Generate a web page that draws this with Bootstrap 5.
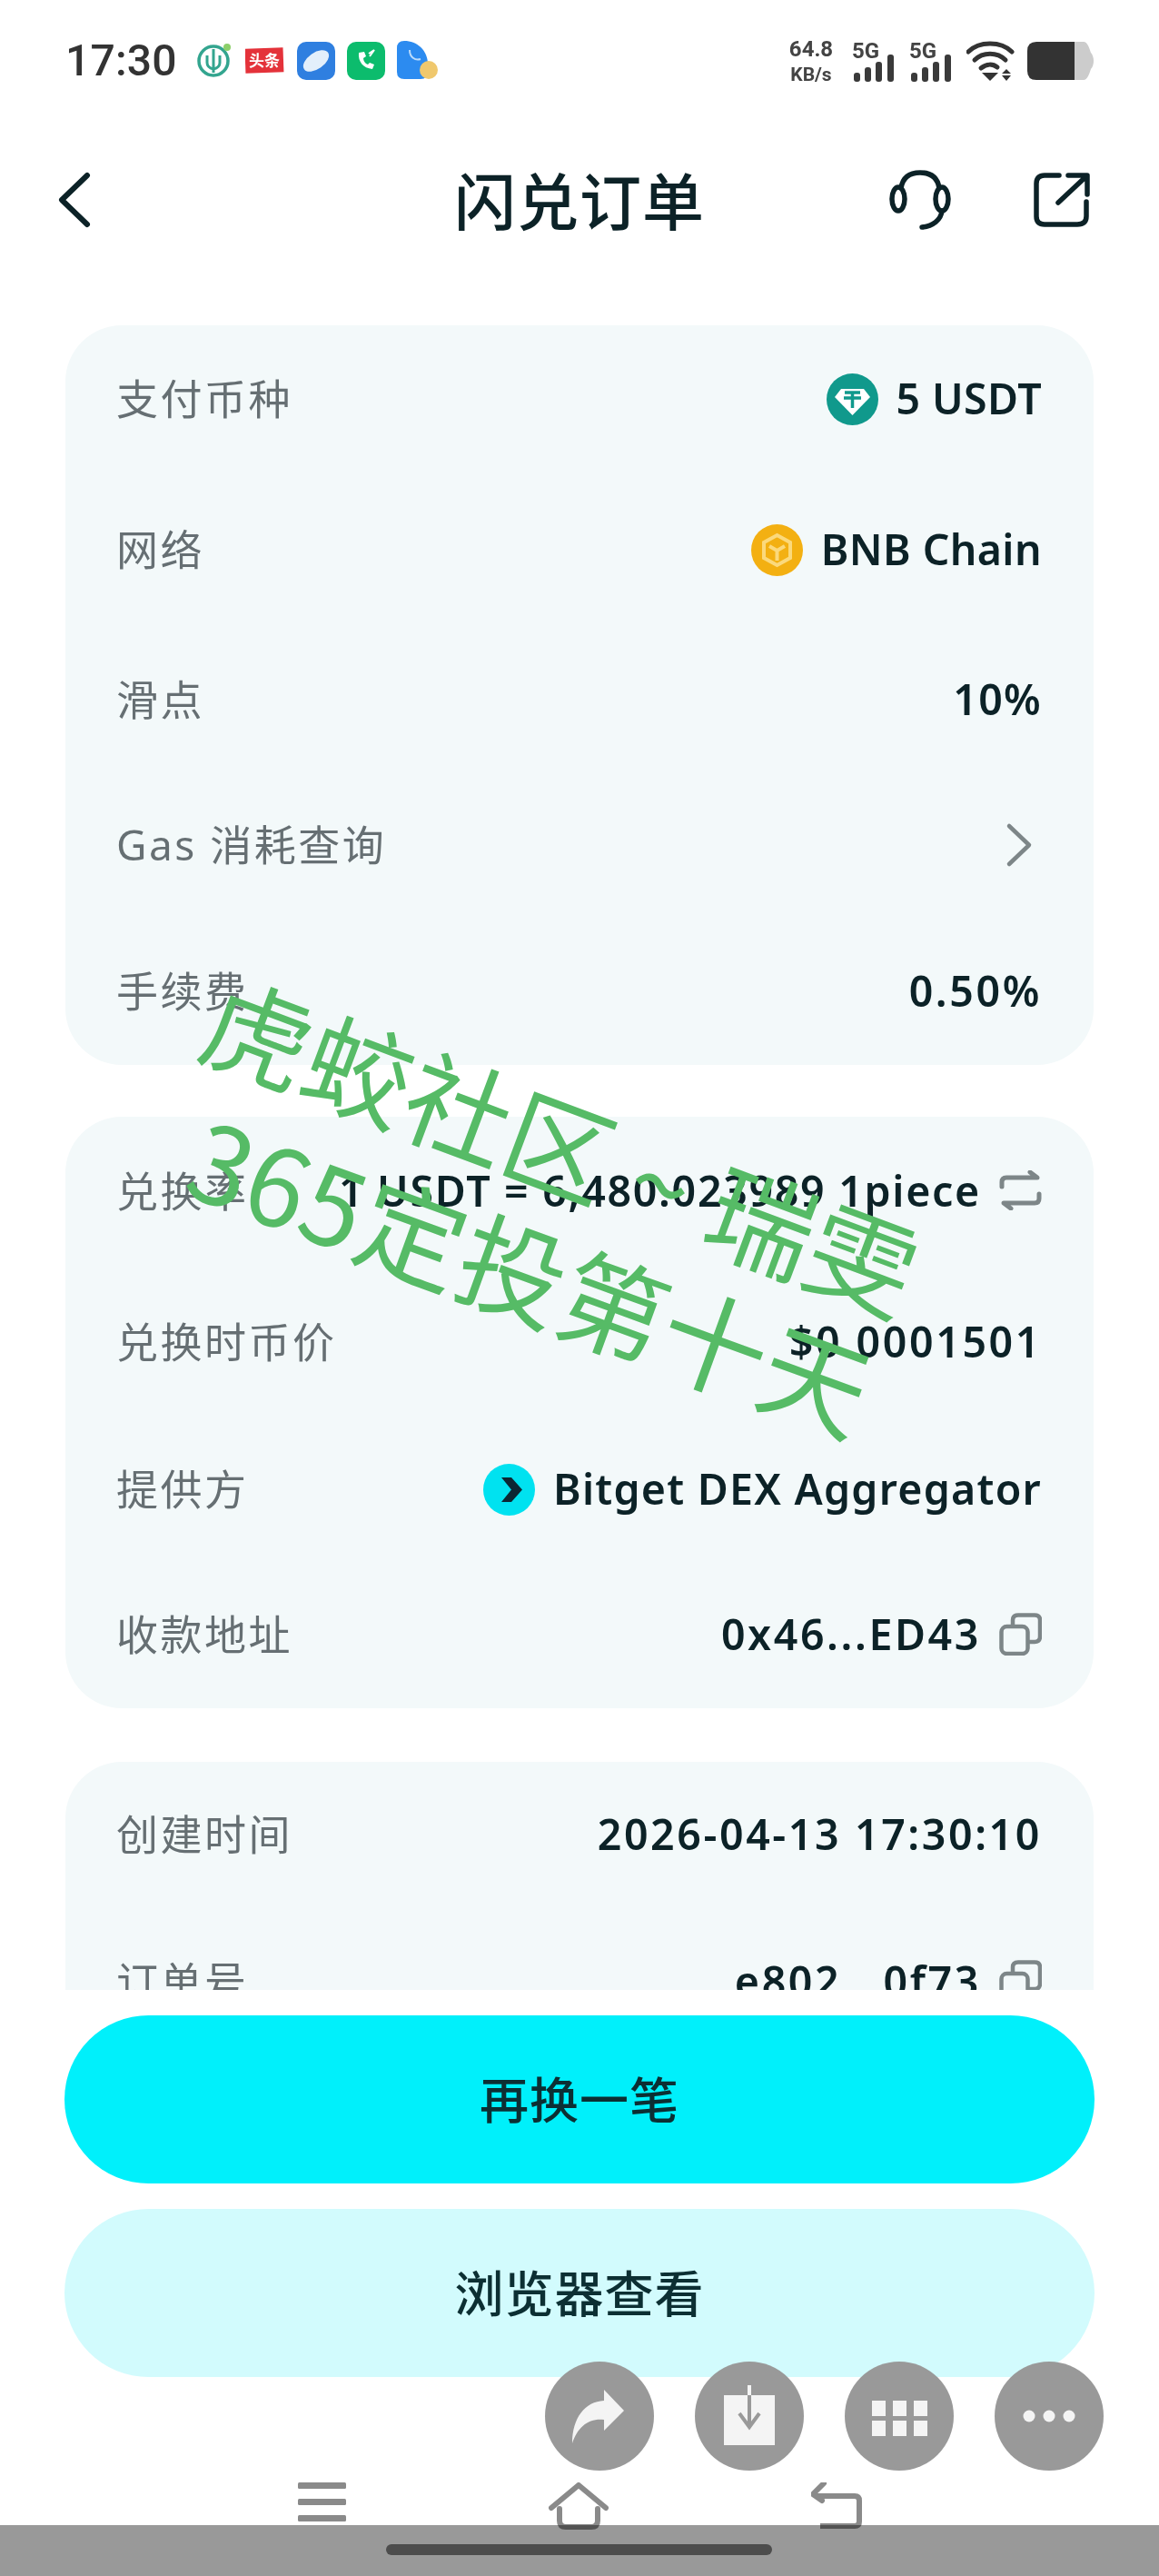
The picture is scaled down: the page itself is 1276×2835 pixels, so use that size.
<!DOCTYPE html>
<html lang="zh-CN">
<head>
<meta charset="utf-8">
<title>闪兑订单</title>
<link href="https://cdn.jsdelivr.net/npm/bootstrap@5.3.0/dist/css/bootstrap.min.css" rel="stylesheet">
<style>
html,body{margin:0;background:#fff}
body{font-family:"Noto Sans","Noto Sans CJK SC",sans-serif;color:#0c2227}
.shot{width:1276px;height:2835px;overflow:hidden;background:#fff}
.sbar{height:134px;padding:0 71px 0 72px}
.clock{font-family:Roboto,sans-serif;font-weight:500;font-size:48px;color:#333;line-height:1;letter-spacing:.2px}
.nets{font-family:Roboto,sans-serif;font-weight:700;color:#444;text-align:center;line-height:1;width:60px}
.nets-a{font-size:24px}.nets-b{font-size:21px;margin-top:6px}
.si{margin-left:13px}
.sg{margin-left:15px}
.tbar{height:172px;padding:0 76px 0 62px}
.ttl{font-family:"Noto Sans CJK SC",sans-serif;font-weight:500;font-size:68px;letter-spacing:1px;line-height:1;padding-bottom:2px}
.tbar-side{width:235px}
.tbar-tools{gap:91px}
.scroller{height:1884px;overflow:hidden;padding:52px 72px 0;flex:none}
.panel{background:#f3f9fa;border-radius:62px;padding:0 57px 0 56px}
.gap-panel{margin-top:57px}
.gap-panel2{margin-top:59px}
.rw{font-size:44px;line-height:1.2}
.h156{height:156px}.h160{height:160px}.h162{height:162px}.h163{height:163px}.h169{height:169px}.h170{height:170px}
.lbl{font-family:"Noto Sans","Noto Sans CJK SC",sans-serif;font-weight:400;font-size:46px;letter-spacing:2.5px;color:#666f73}
.val{font-weight:600;font-size:46.5px;letter-spacing:.4px;white-space:nowrap}
.val-flex{display:flex;align-items:center;gap:20px}
.ls1{letter-spacing:1.25px}.ls2{letter-spacing:1.7px}.ls3{letter-spacing:2.6px}
.coin{width:57px;height:57px;flex:none}
.acts{padding:28px 71px 0;flex:none}
.pill-a,.pill-b{display:flex;align-items:center;justify-content:center;width:100%;height:185px;padding:0 0 4px;border-radius:93px;border:0;font-family:"Noto Sans CJK SC",sans-serif;font-weight:500;font-size:54px;letter-spacing:1px;color:#0c2f33}
.pill-a{background:#00f0fb}
.pill-b{background:#d2fbfd;margin-top:28px}
.floats{right:61px;top:2599px;gap:45px}
.fab{width:120px;height:120px;border-radius:50%;background:#999;display:block;flex:none}
.navrow{padding-top:116px;gap:223px}
.band{left:0;right:0;bottom:0;height:56px;background:#999;mix-blend-mode:multiply}
.hbar{width:425px;height:12px;border-radius:6px;background:#4d4d4d;top:21px;left:425px}
.wm{font-family:"Noto Sans CJK SC",sans-serif;font-weight:400;color:#56bb66;line-height:1;white-space:nowrap;transform-origin:0 0;font-size:118px}
.wm1{left:252px;top:1057px;transform:rotate(20.5deg)}
.wm2{left:236px;top:1210px;transform:rotate(20deg)}
.wm-t{padding:0 27px}
</style>
</head>
<body>
<div class="shot position-relative d-flex flex-column">

  <div class="sbar d-flex align-items-center flex-none">
    <span class="clock me-3">17:30</span>
    <svg width="42" height="42" viewBox="0 0 42 42" class="ms-1"><circle cx="20" cy="21" r="16" fill="none" stroke="#33a58f" stroke-width="3.5"/><path d="M20 8v26M13 15v8c0 4 3 6 7 7 4-1 7-3 7-7v-8" fill="none" stroke="#33a58f" stroke-width="3"/><circle cx="35" cy="6" r="4" fill="#8ccf6a"/></svg>
    <svg width="44" height="34" viewBox="0 0 44 34" class="si"><rect y="3" width="42" height="27" fill="#e4323a" transform="rotate(-2 21 17)"/><text x="21" y="23" font-size="17" font-family="Noto Sans CJK SC" font-weight="700" text-anchor="middle" fill="#fff">头条</text></svg>
    <svg width="42" height="42" viewBox="0 0 42 42" class="si"><rect width="42" height="42" rx="10" fill="#2f7fe0"/><ellipse cx="21" cy="21" rx="16" ry="9" transform="rotate(-35 21 21)" fill="#e3effb"/></svg>
    <svg width="42" height="42" viewBox="0 0 42 42" class="si"><rect width="42" height="42" rx="10" fill="#0cbc6d"/><path d="M13 12c-1 10 5 17 15 18l2-5-5-2-2 2c-3-1-5-4-5-7l3-2-2-5z" fill="#fff"/><path d="M24 13l6-4-5 7" fill="none" stroke="#fff" stroke-width="2"/></svg>
    <svg width="46" height="44" viewBox="0 0 46 44" class="si"><path d="M0 8Q0 0 8 0C22 0 34 10 34 26V34Q34 42 26 42H8Q0 42 0 34Z" fill="#2c8bf0"/><circle cx="35" cy="32" r="10" fill="#f0c86d"/><path d="M14 10c0 8 6 12 12 10" fill="none" stroke="#bcdcfb" stroke-width="2"/></svg>

    <div class="nets ms-auto"><div class="nets-a">64.8</div><div class="nets-b">KB/s</div></div>
    <svg width="48" height="52" viewBox="0 0 48 52" class="sg"><text x="0" y="23" font-family="Roboto" font-weight="700" font-size="24" fill="#444">5G</text><g fill="#3a3a3a"><rect x="2" y="39" width="7" height="10" rx="3"/><rect x="14" y="33" width="7" height="16" rx="3"/><rect x="26" y="27" width="7" height="22" rx="3"/><rect x="39" y="19" width="7" height="30" rx="3"/></g></svg>
    <svg width="48" height="52" viewBox="0 0 48 52" class="sg"><text x="0" y="23" font-family="Roboto" font-weight="700" font-size="24" fill="#444">5G</text><g fill="#3a3a3a"><rect x="2" y="39" width="7" height="10" rx="3"/><rect x="14" y="33" width="7" height="16" rx="3"/><rect x="26" y="27" width="7" height="22" rx="3"/><rect x="39" y="19" width="7" height="30" rx="3"/></g></svg>
    <svg width="54" height="44" viewBox="0 0 54 44" class="sg" fill="none" stroke="#333" stroke-width="5" stroke-linecap="round"><path d="M2 12C14 0 38 0 50 12"/><path d="M9 21C18 12 34 12 43 21"/><path d="M16 30C22 25 29 25 34 29"/><path d="M17 35H35L26 44Z" fill="#333" stroke="none"/><path d="M44 31l5 5H39ZM44 44l5-6H39Z" fill="#333" stroke="none"/></svg>
    <svg width="74" height="42" viewBox="0 0 74 42" class="si"><path d="M52 0H62C66 0 68 6 70 12 72 14 73 18 73 21S72 28 70 30C68 36 66 42 62 42H52Z" fill="#ccc"/><path d="M10 0H52V42H10Q0 42 0 32V10Q0 0 10 0Z" fill="#333"/></svg>
  </div>

  <div class="tbar d-flex align-items-center justify-content-between flex-none">
    <div class="tbar-side"><svg width="40" height="62" viewBox="0 0 40 62" fill="none" stroke="#0c2227" stroke-width="6" stroke-linecap="round" stroke-linejoin="round" class="d-block"><path d="M34 4 6 31 34 58"/></svg></div>
    <div class="ttl">闪兑订单</div>
    <div class="tbar-tools d-flex align-items-center">
      <svg width="68" height="66" viewBox="0 0 68 66" fill="none" stroke="#0c2227" stroke-width="5.500" stroke-linecap="round"><path d="M13 20C15 7 24 3 34 3S53 7 55 20"/><ellipse cx="10" cy="32" rx="7" ry="13"/><ellipse cx="58" cy="32" rx="7" ry="13"/><path d="M58 45C57 55 48 62 36 63"/></svg>
      <svg width="62" height="60" viewBox="0 0 62 60" fill="none" stroke="#0c2227" stroke-width="5.500" stroke-linecap="round" stroke-linejoin="round"><path d="M28 3H12Q3 3 3 12V48Q3 57 12 57H48Q58 57 58 48V32"/><path d="M27 33 58 4M38 3H59V24"/></svg>
    </div>
  </div>

  <div class="scroller">
    <div class="panel">
      <div class="rw h162 d-flex align-items-center justify-content-between"><span class="lbl">支付币种</span><span class="val val-flex"><svg class="coin" viewBox="0 0 57 57"><circle cx="28.5" cy="28.5" r="28.5" fill="#10998c"/><path d="M16 17H41L48 26 28.500 46 9 26Z" fill="#fff"/><path d="M20 21H37M28.500 21V38M19 27H38" stroke="#10998c" stroke-width="3.500" fill="none"/></svg>5 USDT</span></div>
      <div class="rw h170 d-flex align-items-center justify-content-between"><span class="lbl">网络</span><span class="val val-flex"><svg class="coin" viewBox="0 0 57 57"><circle cx="28.5" cy="28.5" r="28.5" fill="#f3b012"/><path d="M28.500 12 43 20V37L28.500 45 14 37V20Z" fill="none" stroke="#fbd97c" stroke-width="4"/><path d="M20 24 28.500 29 37 24M28.500 29V40" fill="none" stroke="#fbd97c" stroke-width="4"/></svg>BNB Chain</span></div>
      <div class="rw h160 d-flex align-items-center justify-content-between"><span class="lbl">滑点</span><span class="val ls1">10%</span></div>
      <div class="rw h160 d-flex align-items-center justify-content-between"><span class="lbl">Gas 消耗查询</span><svg width="34" height="50" viewBox="0 0 34 50" fill="none" stroke="#7d8688" stroke-width="4.500" stroke-linecap="round" stroke-linejoin="round" class="me-2"><path d="M6 4 28 25 6 46"/></svg></div>
      <div class="rw h162 d-flex align-items-center justify-content-between"><span class="lbl">手续费</span><span class="val ls3">0.50%</span></div>
    </div>
    <div class="panel gap-panel">
      <div class="rw h163 d-flex align-items-center justify-content-between"><span class="lbl">兑换率</span><span class="val val-flex ls2">1 USDT = 6,480.023989 1piece<svg width="47" height="44" viewBox="0 0 47 44" fill="none" stroke="#7d8688" stroke-width="5" stroke-linecap="round" stroke-linejoin="round"><path d="M3 18V13Q3 8 8 8H42L34 2"/><path d="M44 26V31Q44 36 39 36H5L13 42"/></svg></span></div>
      <div class="rw h169 d-flex align-items-center justify-content-between"><span class="lbl">兑换时币价</span><span class="val ls3">$0.0001501</span></div>
      <div class="rw h156 d-flex align-items-center justify-content-between"><span class="lbl">提供方</span><span class="val val-flex ls1"><svg class="coin" viewBox="0 0 57 57"><circle cx="28.5" cy="28.5" r="28.5" fill="#00e2f0"/><path d="M20 15H31L43 28.500 31 42H20L31 28.500Z" fill="#0c2733"/></svg>Bitget DEX Aggregator</span></div>
      <div class="rw h163 d-flex align-items-center justify-content-between"><span class="lbl">收款地址</span><span class="val val-flex ls3">0x46...ED43<svg width="47" height="47" viewBox="0 0 47 47" fill="none" stroke="#7d8688" stroke-width="4.500" stroke-linejoin="round"><rect x="2.500" y="15" width="29" height="30" rx="6"/><path d="M15 15V8Q15 2.500 21 2.500H39Q45 2.500 45 8V26Q45 32 39 32H31.500"/></svg></span></div>
    </div>
    <div class="panel gap-panel2">
      <div class="rw h160 d-flex align-items-center justify-content-between"><span class="lbl">创建时间</span><span class="val ls3">2026-04-13 17:30:10</span></div>
      <div class="rw h163 d-flex align-items-center justify-content-between"><span class="lbl">订单号</span><span class="val val-flex ls3">e802...0f73<svg width="47" height="47" viewBox="0 0 47 47" fill="none" stroke="#7d8688" stroke-width="4.500" stroke-linejoin="round"><rect x="2.500" y="15" width="29" height="30" rx="6"/><path d="M15 15V8Q15 2.500 21 2.500H39Q45 2.500 45 8V26Q45 32 39 32H31.500"/></svg></span></div>
    </div>
  </div>

  <div class="acts">
    <button type="button" class="pill-a">再换一笔</button>
    <button type="button" class="pill-b">浏览器查看</button>
  </div>

  <div class="navrow d-flex justify-content-center flex-none">
    <svg width="53" height="43" viewBox="0 0 53 43" fill="#8a8a8a"><rect width="53" height="7" rx="1.500"/><rect y="18" width="53" height="7" rx="1.500"/><rect y="36" width="53" height="7" rx="1.500"/></svg>
    <svg width="66" height="52" viewBox="0 0 66 52" fill="none" stroke="#8a8a8a" stroke-width="6" stroke-linejoin="round" stroke-linecap="round"><path d="M3 28 33 3 63 28"/><path d="M12 29V42Q12 49 19 49H47Q54 49 54 42V29"/></svg>
    <svg width="56" height="51" viewBox="0 0 56 51" fill="none" stroke="#8a8a8a" stroke-width="6" stroke-linejoin="round"><path d="M10 48H48Q53 48 53 43V20Q53 15 48 15H4"/><path d="M14 1 2 13 12 20" stroke-linecap="round"/></svg>
  </div>

  <div class="wm wm1 position-absolute">虎蛟社区<span class="wm-t">~</span>瑞雯</div>
  <div class="wm wm2 position-absolute">365定投第十天</div>

  <div class="floats position-absolute d-flex">
    <svg class="fab" viewBox="0 0 120 120"><path d="M65 31 87 54 65 76V64C48 62 36 72 30 90 30 62 44 44 65 43Z" fill="#f4f4f4"/></svg>
    <svg class="fab" viewBox="0 0 120 120"><rect x="32" y="37" width="56" height="55" fill="#f4f4f4"/><path d="M60 26V37" stroke="#f4f4f4" stroke-width="4"/><path d="M60 37V70M49 57 60 72 71 57" fill="none" stroke="#999" stroke-width="4"/></svg>
    <svg class="fab" viewBox="0 0 120 120"><g fill="#f4f4f4"><rect x="30" y="43" width="15" height="17"/><rect x="53" y="43" width="15" height="17"/><rect x="76" y="43" width="15" height="17"/><rect x="30" y="65" width="15" height="17"/><rect x="53" y="65" width="15" height="17"/><rect x="76" y="65" width="15" height="17"/></g></svg>
    <svg class="fab" viewBox="0 0 120 120"><g fill="#f4f4f4"><circle cx="38" cy="60" r="6.500"/><circle cx="60" cy="60" r="6.500"/><circle cx="82" cy="60" r="6.500"/></g></svg>
  </div>

  <div class="band position-absolute"><div class="hbar position-absolute"></div></div>
</div>
<script src="https://cdn.jsdelivr.net/npm/bootstrap@5.3.0/dist/js/bootstrap.bundle.min.js"></script>
</body>
</html>
